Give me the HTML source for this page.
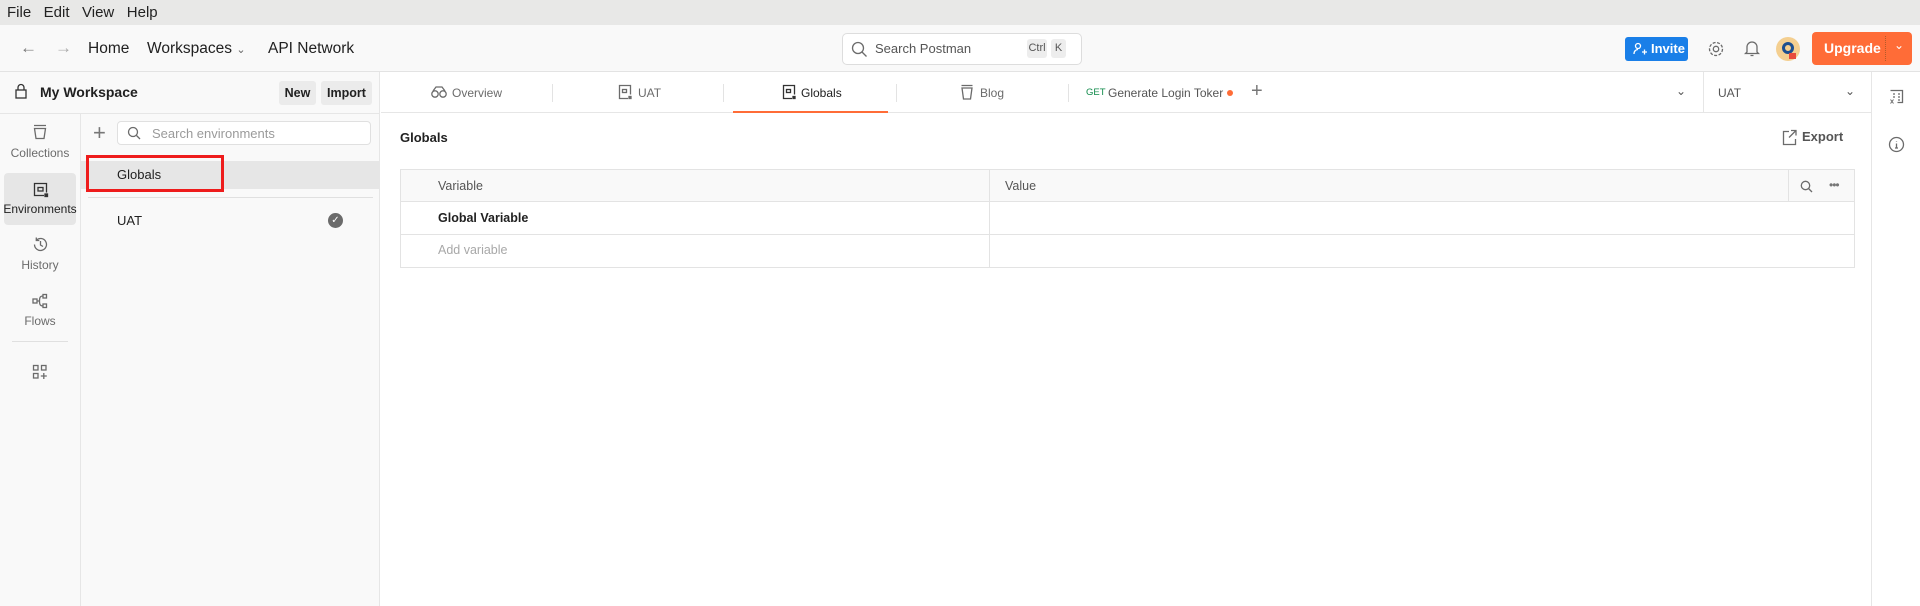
<!DOCTYPE html>
<html><head><meta charset="utf-8"><style>
*{box-sizing:border-box;margin:0;padding:0}
body{width:1920px;height:606px;overflow:hidden;background:#fff;font-family:"Liberation Sans",sans-serif;color:#212121;position:relative}
.a{position:absolute}
.t{position:absolute;white-space:nowrap}
svg{position:absolute;fill:none;stroke:#6b6b6b;stroke-width:1.3}
</style></head><body>
<!-- menu bar -->
<div class="a" style="left:0;top:0;width:1920px;height:25px;background:#e8e8e7"></div>
<div class="t" style="left:7px;top:4px;font-size:15px;color:#222">File&nbsp;&nbsp; Edit&nbsp;&nbsp; View&nbsp;&nbsp; Help</div>
<!-- header -->
<div class="a" style="left:0;top:25px;width:1920px;height:47px;background:#f9f9f9;border-bottom:1px solid #e3e3e3"></div>
<div class="t" style="left:20px;top:38px;font-size:17px;color:#777">&#8592;</div>
<div class="t" style="left:55px;top:38px;font-size:17px;color:#aaa">&#8594;</div>
<div class="t" style="left:88px;top:40px;font-size:15.5px">Home</div>
<div class="t" style="left:147px;top:40px;font-size:15.5px">Workspaces <span style="font-size:11px;color:#666">&#8964;</span></div>
<div class="t" style="left:268px;top:40px;font-size:15.5px">API Network</div>
<div class="a" style="left:842px;top:33px;width:240px;height:32px;background:#fff;border:1px solid #ddd;border-radius:5px"></div>
<svg style="left:851px;top:41px" width="17" height="17"><circle cx="7" cy="7" r="5.5"/><path d="M11 11l4.5 4.5"/></svg>
<div class="t" style="left:875px;top:41px;font-size:13px;color:#555">Search Postman</div>
<div class="a" style="left:1027px;top:39px;width:20px;height:19px;background:#ededed;border-radius:3px;font-size:11px;color:#555;text-align:center;line-height:19px">Ctrl</div>
<div class="a" style="left:1051px;top:39px;width:15px;height:19px;background:#ededed;border-radius:3px;font-size:11px;color:#555;text-align:center;line-height:19px">K</div>
<div class="a" style="left:1625px;top:37px;width:63px;height:24px;background:#1a7fe8;border-radius:3px"></div>
<svg style="left:1633px;top:42px;stroke:#fff" width="14" height="14"><circle cx="5" cy="4" r="2.5"/><path d="M1 12c0-3 2-4.5 4-4.5M9 10h5M11.5 7.5v5"/></svg>
<div class="t" style="left:1651px;top:41px;font-size:13px;color:#fff;font-weight:bold">Invite</div>
<svg style="left:1707px;top:40px" width="18" height="18"><circle cx="9" cy="9" r="2.7"/><circle cx="9" cy="9" r="6.5" stroke-dasharray="3 1.5"/></svg>
<svg style="left:1744px;top:39px" width="16" height="19"><path d="M3 13V8a5 5 0 0 1 10 0v5l1.5 1.5h-13zM6.5 16.5h3"/></svg>
<div class="a" style="left:1776px;top:37px;width:24px;height:24px;border-radius:50%;background:#f4cf90"></div>
<div class="a" style="left:1782px;top:42px;width:12px;height:12px;border-radius:50%;border:3px solid #1d4f8f"></div>
<div class="a" style="left:1789px;top:53px;width:7px;height:6px;background:#e84b3c"></div>
<div class="a" style="left:1812px;top:32px;width:100px;height:33px;background:#ff6c37;border-radius:4px"></div>
<div class="t" style="left:1824px;top:40px;font-size:14px;color:#fff;font-weight:bold">Upgrade</div>
<div class="a" style="left:1885px;top:36px;height:25px;border-left:1px dotted #b45a2a"></div>
<div class="t" style="left:1894px;top:38px;font-size:12px;color:#fff">&#8964;</div>
<!-- workspace row -->
<div class="a" style="left:0;top:72px;width:380px;height:534px;background:#f9f9f9;border-right:1px solid #e6e6e6"></div>
<div class="a" style="left:0;top:113px;width:81px;height:493px;border-right:1px solid #e6e6e6"></div>
<div class="a" style="left:0;top:113px;width:380px;border-top:1px solid #e6e6e6"></div>
<svg style="left:14px;top:83px;stroke:#333" width="14" height="16"><rect x="2" y="7" width="10" height="8"/><path d="M4 7V4.5a3 3 0 0 1 6 0V7"/></svg>
<div class="t" style="left:40px;top:84px;font-size:14px;font-weight:bold">My Workspace</div>
<div class="a" style="left:279px;top:81px;width:37px;height:24px;background:#ebebeb;border-radius:3px;font-size:12.5px;font-weight:bold;text-align:center;line-height:24px">New</div>
<div class="a" style="left:321px;top:81px;width:51px;height:24px;background:#ebebeb;border-radius:3px;font-size:12.5px;font-weight:bold;text-align:center;line-height:24px">Import</div>
<!-- left icons -->
<svg style="left:32px;top:124px" width="16" height="16"><path d="M2 1.5h12M2.5 4.5h11l-1.5 10h-8z"/></svg>
<div class="t" style="left:0;width:80px;text-align:center;top:146px;font-size:12px;color:#6b6b6b">Collections</div>
<div class="a" style="left:4px;top:173px;width:72px;height:52px;background:#e6e6e6;border-radius:4px"></div>
<svg style="left:33px;top:182px;stroke:#333" width="16" height="16"><path d="M11 13.5H1.5v-12h12v9"/><rect x="5" y="5.5" width="5" height="3.5"/><rect x="12" y="12" width="2.5" height="2.5" fill="#333"/></svg>
<div class="t" style="left:0;width:80px;text-align:center;top:202px;font-size:12px;color:#212121">Environments</div>
<svg style="left:32px;top:236px" width="17" height="17"><path d="M2.5 8.5a6 6 0 1 0 1.8-4.3M4.3 1.5v3h3M8.5 5v4l2.5 1.5"/></svg>
<div class="t" style="left:0;width:80px;text-align:center;top:258px;font-size:12px;color:#6b6b6b">History</div>
<svg style="left:32px;top:293px" width="16" height="16"><rect x="1" y="6" width="4" height="4"/><rect x="11" y="1.5" width="3.5" height="3.5"/><rect x="11" y="11" width="3.5" height="3.5"/><path d="M5 8h2.5c0-4 1-5 3.5-5M7.5 8c0 4 1 5 3.5 5"/></svg>
<div class="t" style="left:0;width:80px;text-align:center;top:314px;font-size:12px;color:#6b6b6b">Flows</div>
<div class="a" style="left:12px;top:341px;width:56px;border-top:1px solid #e0e0e0"></div>
<svg style="left:32px;top:364px" width="16" height="16"><rect x="1.5" y="1.5" width="4.5" height="4.5"/><rect x="9.5" y="1.5" width="4.5" height="4.5"/><rect x="1.5" y="9.5" width="4.5" height="4.5"/><path d="M11.8 9v6M8.8 12h6"/></svg>
<!-- env list -->
<div class="t" style="left:93px;top:120px;font-size:22px;color:#777;font-weight:300">+</div>
<div class="a" style="left:117px;top:121px;width:254px;height:24px;background:#fff;border:1px solid #e0e0e0;border-radius:4px"></div>
<svg style="left:127px;top:126px" width="14" height="14"><circle cx="6" cy="6" r="4.5"/><path d="M9.5 9.5l3.5 3.5"/></svg>
<div class="t" style="left:152px;top:126px;font-size:13px;color:#9a9a9a">Search environments</div>
<div class="a" style="left:81px;top:161px;width:298px;height:28px;background:#e6e6e6"></div>
<div class="a" style="left:86px;top:155px;width:138px;height:37px;border:3px solid #ee1c1c"></div>
<div class="t" style="left:117px;top:167px;font-size:13px">Globals</div>
<div class="a" style="left:88px;top:197px;width:285px;border-top:1px solid #e0e0e0"></div>
<div class="t" style="left:117px;top:213px;font-size:13px">UAT</div>
<div class="a" style="left:328px;top:213px;width:15px;height:15px;border-radius:50%;background:#6b6b6b;color:#fff;font-size:10px;text-align:center;line-height:15px">&#10003;</div>
<!-- tabs -->
<div class="a" style="left:381px;top:112px;width:1490px;border-top:1px solid #e6e6e6"></div>
<svg style="left:431px;top:85px" width="16" height="14"><circle cx="4" cy="9" r="3.2"/><circle cx="12" cy="9" r="3.2"/><path d="M2 6l3-4h6l3 4"/></svg>
<div class="t" style="left:452px;top:86px;font-size:12px;color:#6b6b6b">Overview</div>
<div class="a" style="left:552px;top:84px;height:18px;border-left:1px solid #e3e3e3"></div>
<svg style="left:618px;top:84px" width="15" height="16"><path d="M10 14.5H1.5v-13h11v9"/><rect x="4.5" y="5.5" width="4" height="3"/><rect x="11" y="12.5" width="2" height="2" fill="#6b6b6b"/></svg>
<div class="t" style="left:638px;top:86px;font-size:12px;color:#6b6b6b">UAT</div>
<div class="a" style="left:723px;top:84px;height:18px;border-left:1px solid #e3e3e3"></div>
<svg style="left:782px;top:84px;stroke:#333" width="15" height="16"><path d="M10 14.5H1.5v-13h11v9"/><rect x="4.5" y="5.5" width="4" height="3"/><rect x="11" y="12.5" width="2" height="2" fill="#333"/></svg>
<div class="t" style="left:801px;top:86px;font-size:12px;color:#212121">Globals</div>
<div class="a" style="left:733px;top:111px;width:155px;height:2px;background:#ff6c37"></div>
<div class="a" style="left:896px;top:84px;height:18px;border-left:1px solid #e3e3e3"></div>
<svg style="left:960px;top:84px" width="14" height="16"><path d="M1.5 1.5h11M2 4h10l-1.5 11h-7z"/></svg>
<div class="t" style="left:980px;top:86px;font-size:12px;color:#6b6b6b">Blog</div>
<div class="a" style="left:1068px;top:84px;height:18px;border-left:1px solid #e3e3e3"></div>
<div class="t" style="left:1086px;top:87px;font-size:9.5px;color:#0f8a4a">GET</div>
<div class="t" style="left:1108px;top:86px;font-size:12px;color:#555">Generate Login Toker</div>
<div class="a" style="left:1227px;top:90px;width:6px;height:6px;border-radius:50%;background:#ff6c37"></div>
<div class="t" style="left:1251px;top:80px;font-size:20px;color:#777;font-weight:300">+</div>
<div class="t" style="left:1676px;top:84px;font-size:12px;color:#555">&#8964;</div>
<div class="a" style="left:1703px;top:72px;height:41px;border-left:1px solid #e6e6e6"></div>
<div class="t" style="left:1718px;top:86px;font-size:12px;color:#555">UAT</div>
<div class="t" style="left:1845px;top:84px;font-size:12px;color:#555">&#8964;</div>
<div class="a" style="left:1871px;top:72px;width:49px;height:534px;border-left:1px solid #e6e6e6"></div>
<svg style="left:1889px;top:89px" width="15" height="15"><path d="M1.5 1.5h12v12h-5M4 5h2M9 5h2M4 8h2M9 8h2M9 11h2"/><path d="M1.5 10.5l3 4M4.5 10.5l-3 4" stroke-width="1"/></svg>
<svg style="left:1888px;top:136px" width="17" height="17"><circle cx="8.5" cy="8.5" r="7"/><path d="M8.5 7.5v4.5M7 12h3M8.5 5v.5"/></svg>
<!-- content -->
<div class="t" style="left:400px;top:130px;font-size:13px;font-weight:bold">Globals</div>
<svg style="left:1782px;top:129px" width="16" height="17"><path d="M7 2.5H1.5v13h12V10M9 1.5h5v5M14 1.5L7 8.5"/></svg>
<div class="t" style="left:1802px;top:129px;font-size:13px;color:#555;font-weight:bold">Export</div>
<div class="a" style="left:400px;top:169px;width:1455px;height:99px;border:1px solid #e3e3e3"></div>
<div class="a" style="left:401px;top:170px;width:1453px;height:32px;background:#f9f9f9;border-bottom:1px solid #e3e3e3"></div>
<div class="a" style="left:401px;top:234px;width:1453px;border-top:1px solid #e3e3e3"></div>
<div class="a" style="left:989px;top:170px;height:97px;border-left:1px solid #e3e3e3"></div>
<div class="a" style="left:1788px;top:170px;height:32px;border-left:1px solid #e3e3e3"></div>
<div class="t" style="left:438px;top:179px;font-size:12.5px;color:#555">Variable</div>
<div class="t" style="left:1005px;top:179px;font-size:12.5px;color:#555">Value</div>
<svg style="left:1800px;top:180px" width="13" height="13"><circle cx="5.5" cy="5.5" r="4.2"/><path d="M8.5 8.5l3.5 3.5"/></svg>
<div class="t" style="left:1829px;top:178px;font-size:12px;color:#777;letter-spacing:-1px">•••</div>
<div class="t" style="left:438px;top:211px;font-size:12.5px;font-weight:bold">Global Variable</div>
<div class="t" style="left:438px;top:243px;font-size:12.5px;color:#a8a8a8">Add variable</div>
</body></html>
